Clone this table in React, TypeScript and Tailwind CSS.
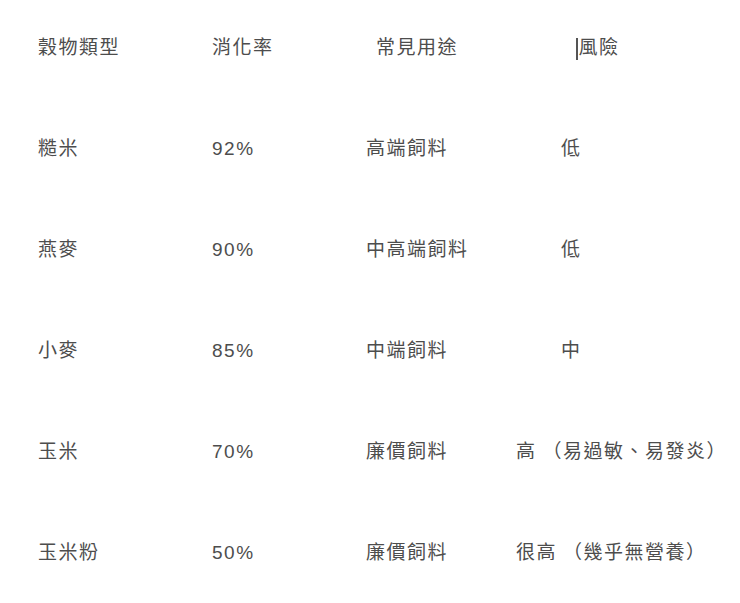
const header = ["穀物類型", "消化率", "常見用途", "風險"];

const rows = [
  { grain: "糙米", rate: "92%", use: "高端飼料", risk: "低", note: "", riskPad: "pl-[45px]" },
  { grain: "燕麥", rate: "90%", use: "中高端飼料", risk: "低", note: "", riskPad: "pl-[45px]" },
  { grain: "小麥", rate: "85%", use: "中端飼料", risk: "中", note: "", riskPad: "pl-[45px]" },
  { grain: "玉米", rate: "70%", use: "廉價飼料", risk: "高", note: "（易過敏、易發炎）", riskPad: "pl-0" },
  { grain: "玉米粉", rate: "50%", use: "廉價飼料", risk: "很高", note: "（幾乎無營養）", riskPad: "pl-0" },
];

export default function App() {
  return (
    <div
      className="w-[740px] h-[603px] bg-white text-[#4d4d4d] text-[19px] tracking-[1.5px] overflow-hidden"
      style={{ fontFamily: '"Liberation Sans", "Noto Sans CJK TC", sans-serif' }}
    >
      {/* header row */}
      <div className="grid grid-cols-[174px_154px_150px_1fr] pl-[38px] h-[97px] items-center">
        <span>{header[0]}</span>
        <span>{header[1]}</span>
        <span className="pl-[10px]">{header[2]}</span>
        <span className="flex items-center pl-[60px]">
          <span className="inline-block w-[1.5px] h-[22px] bg-[#555] mr-[1px]" />
          {header[3]}
        </span>
      </div>
      {rows.map((r) => (
        <div
          key={r.grain}
          className="grid grid-cols-[174px_154px_150px_1fr] pl-[38px] h-[101px] pt-[3px] items-center"
        >
          <span>{r.grain}</span>
          <span>{r.rate}</span>
          <span>{r.use}</span>
          <span className={r.riskPad}>
            {r.risk}
            {r.note && <span className="ml-[6px]">{r.note}</span>}
          </span>
        </div>
      ))}
    </div>
  );
}
